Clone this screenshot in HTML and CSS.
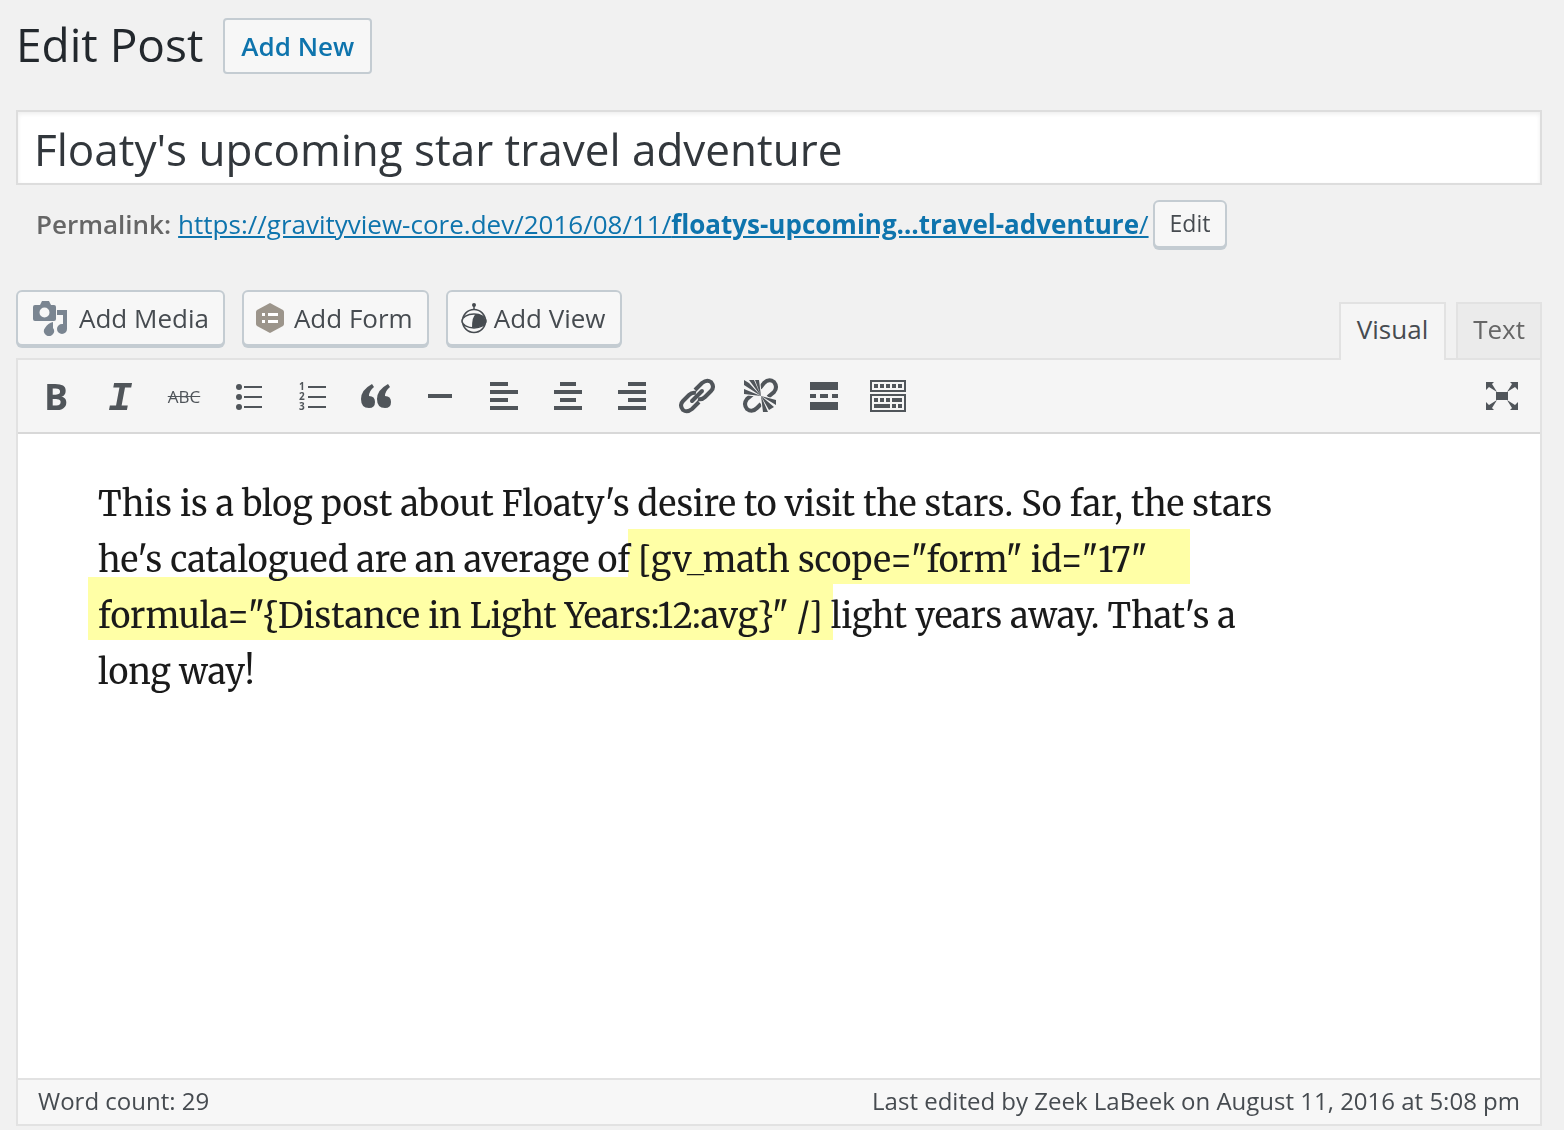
FILE: index.html
```html
<!DOCTYPE html>
<html lang="en">
<head>
    <meta charset="UTF-8">
    <meta name="viewport" content="width=device-width, initial-scale=1.0">
    <title>Edit Post</title>
    <link rel="stylesheet" href="styles.css">
</head>
<body>
    <header class="page-header">
        <h1>Edit Post</h1>
        <a href="#" class="add-new">Add New</a>
    </header>

    <input type="text" class="post-title" aria-label="Post title" value="Floaty's upcoming star travel adventure">

    <div class="permalink">
        <strong>Permalink:</strong>
        <a href="#">https://gravityview-core.dev/2016/08/11/<b>floatys-upcoming…travel-adventure</b>/</a>
        <button type="button" class="btn btn-small">Edit</button>
    </div>

    <div class="editor-tools">
        <div class="media-buttons">
            <button type="button" class="btn">
                <svg viewBox="0 0 36 36" width="36" height="36" aria-hidden="true">
                    <path fill="#7a8591" fill-rule="evenodd" d="M2 5h5l2-4h7l2 4h3q2 0 2 2v12q0 2-2 2H2q-2 0-2-2V7q0-2 2-2zM11.500 7.500a5 5 0 1 0 0 10a5 5 0 1 0 0-10z"/>
                    <path fill="#7a8591" d="M24 10h10v19a5 5 0 1 1-5-5h1v-9h-6zM20 22v6a5 5 0 1 1-8 0q3-5 8-6z"/>
                </svg>
                Add Media
            </button>
            <button type="button" class="btn btn-form">
                <svg viewBox="0 0 28 32" width="28" height="32" aria-hidden="true">
                    <path fill="#9c958b" d="M14 1l13 7q1 1 1 2v12q0 1-1 2l-13 7l-13-7q-1-1-1-2V10q0-1 1-2z"/>
                    <path fill="#fff" d="M6 11h3v3H6zM12 11h10v3H12zM6 18h3v3H6zM12 18h10v3H12z"/>
                </svg>
                Add Form
            </button>
            <button type="button" class="btn btn-view">
                <svg viewBox="0 0 26 32" width="26" height="32" aria-hidden="true">
                    <circle cx="13" cy="19" r="11.500" fill="none" stroke="#464b50" stroke-width="1.500"/>
                    <ellipse cx="13" cy="19" rx="12" ry="7" fill="#f7f7f7" stroke="#464b50" stroke-width="1.500"/>
                    <path fill="#464b50" d="M11 26q0-12 4-14q8 1 10 7q-2 7-14 7z"/>
                    <path stroke="#464b50" stroke-width="1.500" d="M13 3v5"/>
                    <circle cx="13" cy="3" r="2" fill="#464b50"/>
                </svg>
                Add View
            </button>
        </div>
        <div class="tabs">
            <button type="button" class="tab active">Visual</button>
            <button type="button" class="tab">Text</button>
        </div>
    </div>

    <main class="editor">
        <div class="toolbar">
            <button type="button" class="tool bold" aria-label="Bold">B</button>
            <button type="button" class="tool italic" aria-label="Italic">I</button>
            <button type="button" class="tool strike" aria-label="Strikethrough">ABC</button>
            <button type="button" class="tool" aria-label="Bulleted list">
                <svg viewBox="0 0 40 40">
                    <circle cx="11" cy="11" r="3"/><circle cx="11" cy="21" r="3"/><circle cx="11" cy="31" r="3"/>
                    <path d="M16 10h18v2H16zM16 20h18v2H16zM16 30h18v2H16z"/>
                </svg>
            </button>
            <button type="button" class="tool" aria-label="Numbered list">
                <svg viewBox="0 0 40 40">
                    <text x="7" y="14">1</text><text x="7" y="24">2</text><text x="7" y="34">3</text>
                    <path d="M16 10h18v2H16zM16 20h18v2H16zM16 30h18v2H16z"/>
                </svg>
            </button>
            <button type="button" class="tool" aria-label="Blockquote">
                <svg viewBox="0 0 40 40">
                    <path d="M16 8l2 3q-5 4-5 9q6 0 6 6q0 6-6 6q-8 0-8-9q0-9 11-15zM32 8l2 3q-5 4-5 9q6 0 6 6q0 6-6 6q-8 0-8-9q0-9 11-15z"/>
                </svg>
            </button>
            <button type="button" class="tool" aria-label="Horizontal line">
                <svg viewBox="0 0 40 40"><path d="M8 18h24v4H8z"/></svg>
            </button>
            <button type="button" class="tool" aria-label="Align left">
                <svg viewBox="0 0 40 40"><path d="M6 6h18v4H6zM6 14h28v4H6zM6 22h18v4H6zM6 30h28v4H6z"/></svg>
            </button>
            <button type="button" class="tool" aria-label="Align center">
                <svg viewBox="0 0 40 40"><path d="M12 6h16v4H12zM6 14h28v4H6zM12 22h16v4H12zM6 30h28v4H6z"/></svg>
            </button>
            <button type="button" class="tool" aria-label="Align right">
                <svg viewBox="0 0 40 40"><path d="M16 6h18v4H16zM6 14h28v4H6zM16 22h18v4H16zM6 30h28v4H6z"/></svg>
            </button>
            <button type="button" class="tool" aria-label="Insert link">
                <svg viewBox="0 0 40 40" class="line">
                    <path d="M19 14l7-7q5-4 9-1q4 5 0 9l-6 6q-3 3-7 2M23 26l-7 7q-5 4-9 1q-4-5 0-9l6-6q3-3 7-2"/>
                    <path stroke-linecap="round" d="M16 25l10-10"/>
                </svg>
            </button>
            <button type="button" class="tool" aria-label="Remove link">
                <svg viewBox="0 0 40 40">
                    <path class="stroke" d="M20 12l4-5q5-5 10-1q4 5 0 10l-6 5M21 28l-4 4q-5 5-10 1q-4-5 0-10l6-5"/>
                    <path class="cut" d="M21 20L4 9v-5l5 3zM21 20L9 4h5zM21 20L4 13v5zM21 20L15 4h4zM21 20l15 4v5zM21 20l2 16h5zM21 20l8 14l5-3z"/>
                </svg>
            </button>
            <button type="button" class="tool" aria-label="Read more tag">
                <svg viewBox="0 0 40 40"><path d="M6 6h28v8H6zM6 18h6v4H6zM16 18h8v4h-8zM28 18h6v4h-6zM6 26h28v8H6z"/></svg>
            </button>
            <button type="button" class="tool" aria-label="Toolbar toggle">
                <svg viewBox="0 0 40 40">
                    <path fill-rule="evenodd" d="M2 4h36v12H2zM4 6v8h32V6zM2 18h36v18H2zM4 20v14h32V20z"/>
                    <path d="M6 8h4v4H6zM12 8h4v4h-4zM18 8h4v4h-4zM24 8h4v4h-4zM30 8h4v4h-4zM6 22h4v4H6zM12 22h4v4h-4zM18 22h4v4h-4zM24 22h10v4H24zM6 28h16v4H6zM24 28h4v4h-4zM30 28h4v4h-4z"/>
                </svg>
            </button>
            <button type="button" class="tool fullscreen" aria-label="Fullscreen">
                <svg viewBox="0 0 40 40">
                    <path d="M14 16h12v8H14zM4 6h8l-2 2l5 8l-8-5l-3 3zM36 6v8l-3-3l-8 5l5-8l-2-2zM4 34v-8l3 3l8-5l-5 8l2 2zM36 34h-8l2-2l-5-8l8 5l3-3z"/>
                </svg>
            </button>
        </div>

        <div class="content" contenteditable="true" spellcheck="false">
            <p>
                This is a blog post about Floaty's desire to visit the stars. So far, the stars<br>
                he's catalogued are an average of <mark>[gv_math scope="form" id="17"</mark><br>
                <mark class="line-start">formula="{Distance in Light Years:12:avg}" /]</mark> light years away. That's a<br>
                long way!
            </p>
        </div>

        <footer class="status-bar">
            <span>Word count: 29</span>
            <span>Last edited by Zeek LaBeek on August 11, 2016 at 5:08 pm</span>
        </footer>
    </main>
</body>
</html>
```

FILE: styles.css
```css
* {
    box-sizing: border-box;
}

body {
    margin: 0;
    padding: 18px 22px 4px 16px;
    min-height: 100vh;
    display: flex;
    flex-direction: column;
    background-color: #f1f1f1;
    color: #444;
    font-family: "Open Sans", sans-serif;
    font-size: 26px;
}

button {
    font-family: inherit;
    color: inherit;
    cursor: pointer;
}

a {
    color: #0e74ad;
}

.page-header {
    display: flex;
    align-items: flex-start;
    gap: 20px;
}

h1 {
    margin: 0;
    color: #23282d;
    font-size: 46px;
    font-weight: 400;
    line-height: 52px;
}

.add-new {
    padding: 0 16px;
    border: 2px solid #c4ccd2;
    border-radius: 4px;
    background-color: #f7f7f7;
    font-weight: 600;
    line-height: 52px;
    text-decoration: none;
}

.post-title {
    width: 100%;
    height: 75px;
    margin-top: 36px;
    padding: 2px 16px 0;
    border: 2px solid #ddd;
    background-color: #fff;
    box-shadow: inset 0 2px 4px rgba(0, 0, 0, 0.07);
    color: #32373c;
    font-family: inherit;
    font-size: 44px;
}

.permalink {
    display: flex;
    align-items: center;
    gap: 4px;
    margin-top: 15px;
    padding-left: 20px;
    color: #666;
}

.permalink strong {
    padding-right: 3px;
    font-weight: 600;
}

.btn {
    display: flex;
    align-items: center;
    gap: 10px;
    height: 56px;
    padding: 0 14px 0 15px;
    border: 2px solid #c4ccd2;
    border-radius: 6px;
    background-color: #f7f7f7;
    box-shadow: 0 2px 0 #c4ccd2;
    color: #464b50;
    font-size: 26px;
}

.btn-small {
    height: 48px;
    padding: 0 15px 2px;
    font-size: 23px;
}

.btn-form {
    padding-left: 12px;
}

.btn-view {
    gap: 7px;
    padding-left: 13px;
}

.editor-tools {
    display: flex;
    justify-content: space-between;
    align-items: flex-end;
    margin-top: 42px;
}

.media-buttons {
    display: flex;
    gap: 17px;
    padding-bottom: 12px;
}

.tabs {
    display: flex;
    align-items: flex-start;
    gap: 10px;
}

.tab {
    height: 56px;
    padding: 0 15px 4px;
    border: 2px solid #e2e2e2;
    border-bottom: 0;
    background-color: #ebebeb;
    color: #666;
    font-size: 26px;
}

.tab.active {
    height: 58px;
    margin-bottom: -2px;
    padding: 0 16px 6px;
    background-color: #f5f5f5;
    color: #464b50;
    z-index: 1;
}

.editor {
    flex: 1;
    display: flex;
    flex-direction: column;
    border: 2px solid #e2e2e2;
    background-color: #fff;
}

.toolbar {
    display: flex;
    padding: 4px 6px;
    border-bottom: 2px solid #d8d8d8;
    background-color: #f5f5f5;
}

.tool {
    display: flex;
    justify-content: center;
    align-items: center;
    width: 64px;
    height: 64px;
    padding: 0;
    border: none;
    background: none;
    color: #50555a;
}

.tool svg {
    width: 40px;
    height: 40px;
    fill: currentColor;
}

.tool text {
    font-size: 10px;
    font-weight: 700;
}

.tool .stroke,
.tool .line {
    fill: none;
    stroke: currentColor;
    stroke-width: 4px;
}

.tool .cut {
    stroke: #f5f5f5;
    stroke-width: 2px;
    paint-order: stroke;
}

.bold {
    font-size: 36px;
    font-weight: 700;
}

.italic {
    padding-top: 6px;
    font-family: "Liberation Mono", monospace;
    font-size: 40px;
    font-style: italic;
    font-weight: 700;
}

.strike {
    font-size: 17px;
    text-decoration: line-through;
}

.fullscreen {
    margin-left: auto;
}

.content {
    flex: 1;
    padding: 42px 80px;
    outline: none;
    color: #1a1a1a;
    font-family: Merriweather, "DejaVu Serif", serif;
    font-size: 34px;
    line-height: 56px;
}

.content p {
    margin: 0;
    white-space: nowrap;
}

/* highlighted shortcode, the two lines overlap without getting darker */
mark {
    margin-left: -10px;
    padding: 10px 42px 3px 10px;
    background-color: #ffffa6;
    color: inherit;
    mix-blend-mode: darken;
}

mark.line-start {
    margin-right: -10px;
    padding: 18px 10px 3px;
}

.status-bar {
    display: flex;
    justify-content: space-between;
    padding: 0 20px 2px;
    border-top: 2px solid #e2e2e2;
    background-color: #f7f7f7;
    color: #464b50;
    font-size: 24px;
    line-height: 42px;
}
```
